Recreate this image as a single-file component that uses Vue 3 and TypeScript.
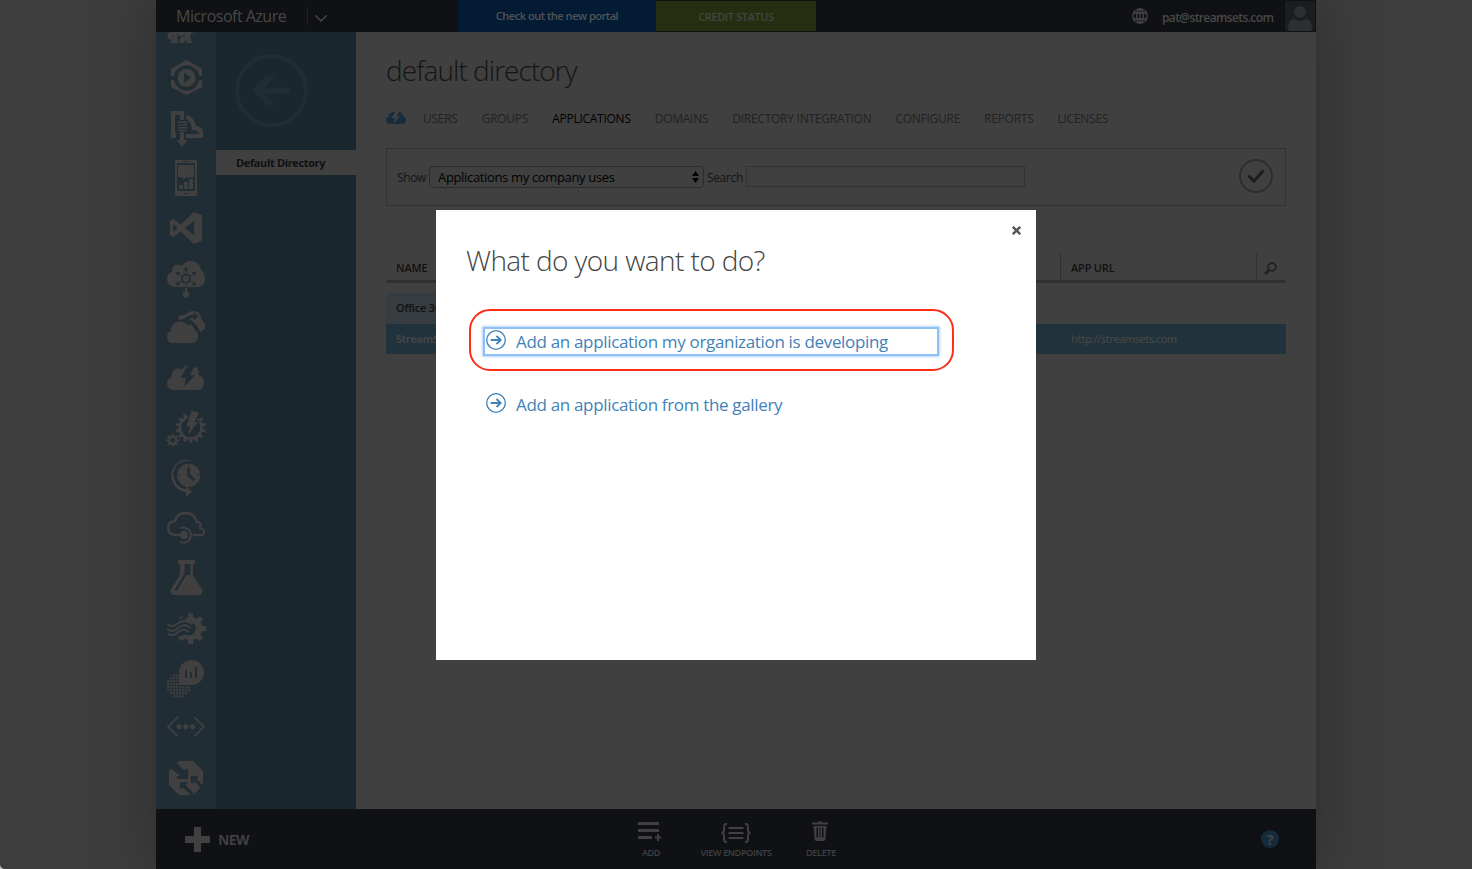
<script setup lang="ts">
interface Tab {
  label: string
  active?: boolean
}

const tabs: Tab[] = [
  { label: 'USERS' },
  { label: 'GROUPS' },
  { label: 'APPLICATIONS', active: true },
  { label: 'DOMAINS' },
  { label: 'DIRECTORY INTEGRATION' },
  { label: 'CONFIGURE' },
  { label: 'REPORTS' },
  { label: 'LICENSES' },
]

// Outline of a cog: teeth alternate between the inner and outer radius.
function gear(cx: number, cy: number, inner: number, outer: number, teeth: number): string {
  const step = (Math.PI * 2) / teeth
  const points: string[] = []
  for (let i = 0; i < teeth; i++) {
    const a = i * step - Math.PI / 2
    const corners: [number, number][] = [
      [a - step * 0.3, inner],
      [a - step * 0.19, outer],
      [a + step * 0.19, outer],
      [a + step * 0.3, inner],
    ]
    for (const [angle, r] of corners) {
      points.push(`${(cx + r * Math.cos(angle)).toFixed(2)} ${(cy + r * Math.sin(angle)).toFixed(2)}`)
    }
  }
  return `M${points.join('L')}Z`
}

const bigGear = gear(34.7, 25.7, 12.2, 15.2, 14)
const smallGear = gear(16.7, 38.3, 4.6, 6.6, 8)
const streamGear = gear(34.7, 26.6, 11.5, 15.6, 8)

// Cells of the dotted globe, kept only inside its circle.
const cells: { x: number; y: number }[] = []
for (let row = 0; row < 8; row++) {
  for (let col = 0; col < 8; col++) {
    const x = 11.2 + col * 3
    const y = 22.2 + row * 3
    const dx = x + 1 - 22.7
    const dy = y + 1 - 33.7
    const underBubble = x > 21.5 && y < 33
    if (dx * dx + dy * dy < 140 && !underBubble) cells.push({ x, y })
  }
}
</script>

<template>
  <div class="page">
    <div class="shell">
      <header class="topbar">
        <span class="brand">Microsoft Azure</span>
        <span class="brand-menu">
          <svg width="14" height="9" viewBox="0 0 14 9"><path d="M1.2 1.2L7 7L12.8 1.2" fill="none" stroke="#484848" stroke-width="1.4" /></svg>
        </span>
        <span class="portal">Check out the new portal</span>
        <span class="credit">CREDIT STATUS</span>
        <span class="spacer"></span>
        <svg class="globe" width="16" height="16" viewBox="0 0 16 16">
          <g fill="none" stroke="#464646" stroke-width="1.3">
            <circle cx="8" cy="8" r="7.2" />
            <ellipse cx="8" cy="8" rx="3.3" ry="7.2" />
            <path d="M8 1V15M1.8 5H14.2M1.8 11H14.2" />
          </g>
        </svg>
        <span class="email">pat@streamsets.com</span>
        <svg class="avatar" width="30" height="30" viewBox="0 0 30 30">
          <rect width="30" height="30" fill="#1c1d20" />
          <path d="M3 30Q3 18 9 17.8Q15 22 21 17.8Q27 18 27 30Z" fill="#2d2e31" />
          <circle cx="15" cy="11" r="6" fill="#2d2e31" />
        </svg>
      </header>

      <div class="body">
        <nav class="rail">
          <svg class="peek" viewBox="0 0 60 20">
            <path d="M11 2L14 0H35L36 2L39 1L40 -1V1Q38 3 35 2L34 4L36 11H30L31 7L27 11H23L25 5L21 4L22 11H15L16 7L13 8Z" fill="#404040" />
            <path d="M16 3L18 5M21 2L25 5L29 3" class="cut-line" />
          </svg>
          <svg viewBox="0 0 60 50">
            <path d="M15 24V16.8L30.6 8L46 16.8V24H43.4A13 13 0 0 0 17.8 24Z" />
            <path d="M15 28V35L30.6 43L46 35V28H43.4A13 13 0 0 1 17.8 28Z" />
            <circle cx="30.6" cy="25.8" r="9" />
            <path class="cut" d="M28 20.5L35 25.7L28 31Z" />
          </svg>
          <svg viewBox="0 0 60 50">
            <path d="M15 9H28V18H24V13H19V31H20V36H15Z" />
            <path d="M22 19.5H31V21H22ZM22 22.2H31V23.7H22ZM22 25H31V26.5H22ZM22 27.7H31V29H22Z" />
            <path d="M30 13Q38 14 40 24Q47 25 47 30V36H30V32H43Q43 28.5 38 28H36Q36 20 30 17Z" />
            <path d="M24 30H28V38H31.5L26 45L20.7 38H24Z" />
          </svg>
          <svg viewBox="0 0 60 50">
            <rect x="19" y="8" width="22" height="36" rx="1" />
            <rect class="cut" x="21" y="11" width="18" height="28" />
            <path class="cut" d="M26 9H33V9.8H26ZM28 41H32V42H28Z" />
            <path d="M23.5 13H36.5Q38 13 38 14.5V24Q38 25.5 36.5 25.5H29.5L27 29L27.5 25.5H23.5Q22 25.5 22 24V14.5Q22 13 23.5 13Z" />
            <path d="M23 33H27V37H23ZM28 30H32V37H28ZM33 27H37V37H33Z" />
          </svg>
          <svg viewBox="0 0 60 50">
            <path fill-rule="evenodd" d="M38 10L46 13V38.6L38 42L24.5 29.6L17.5 35L14 33.2V18.8L17.5 17L24.5 22.4ZM38 19L29 26L38 33.5ZM17.2 22.2V29.8L21.5 26Z" />
          </svg>
          <svg viewBox="0 0 60 50">
            <path d="M19 35Q11 34 11 27Q11 21 16 20Q16 12 22 12.5Q25 12.5 26 14Q29 9 35 9Q43 9 45 18Q49 21 49 27Q49 34 42 35Z" />
            <circle cx="30" cy="42.5" r="3.2" />
            <path d="M29 34H31V42H29Z" />
            <path class="cut-line" d="M30 17V21.5M30 31V36M21 21L26 24.5M39 21L34 24.5M21 32L26 29M39 32L34 29" stroke-width="1.3" />
            <circle class="cut-line ring" cx="30" cy="26.7" r="4" />
            <path class="cut" d="M30 14.5L32.5 18H27.5ZM19.5 20L24 20L21.5 24ZM40.5 20L36 20L38.5 24ZM19.5 33.5L24 33L21.5 29.5ZM40.5 33.5L36 33L38.5 29.5Z" />
          </svg>
          <svg viewBox="0 0 60 50">
            <path d="M22 17Q23 12 29 13Q33 8.5 38 9Q45 10 45.5 18Q49 20 49 25Q48 29 44 30Q42 24 38 21Q32 14 25 18Z" />
            <path class="cut-line thick" d="M28 20Q31 14.5 38 14.3" />
            <path class="cut" d="M37.5 10L42.5 14.3L37.5 18.5Z" />
            <path class="halo" d="M17 41Q11 41 11 35Q11 30 15 29Q16 19.5 24 19.5Q29 19.5 31 23Q37 21 38.5 28Q42 29 42 34Q42 41 36 41Z" />
          </svg>
          <svg viewBox="0 0 60 50">
            <path d="M17 38Q11 37 11 32Q11 27 15 26Q15 18 21 16.5Q24 16 26 17.5Q29 12.5 35 13Q42 15 42 23Q48 24 48 31Q47 37 43 38Z" />
            <path class="cut" d="M33 11L24.5 26H30L28 35L39 23H34L40 11Z" />
            <path d="M36.5 20.500L39.5 15Q43 16 42.5 23Z" />
          </svg>
          <svg viewBox="0 0 60 50">
            <path :d="bigGear" />
            <circle class="cut" cx="34.7" cy="25.7" r="9.6" />
            <path class="halo" d="M35.5 8.5L43 10.5L38.5 20H42L32 33L34 24.5H30.5Z" />
            <path :d="smallGear" />
            <circle class="cut" cx="16.7" cy="38.3" r="2.4" />
          </svg>
          <svg viewBox="0 0 60 50">
            <circle cx="32.7" cy="23.3" r="11.5" />
            <path class="cut" d="M31 16H34V22L39.5 27.5L37.5 29.5L31 24Z" />
            <path class="cut" d="M32 13H33.4V14.4H32ZM22.5 22.5H24V24H22.5ZM41.5 22.5H43V24H41.5Z" />
            <path d="M38 9Q26 5 18.5 13.5Q12 23 18 33Q23 39.5 30 40V45L36 39.5L30 34V37Q22 36 19 29Q15 20 21 13Q28 7 38 9Z" />
          </svg>
          <svg viewBox="0 0 60 50">
            <path class="line" d="M23 33H19Q12 32 12 26Q12 20 19 19Q21 11 30 11Q38 11 41 20Q46 20 44 26Q48 27 48 30Q48 33 44 33H37" stroke-width="2.3" />
            <circle cx="28" cy="33" r="4.2" />
            <path class="line" d="M24.5 26Q29 24.5 33 28Q37 33 33 38.5Q29 42 24 40" stroke-width="2" />
            <path d="M20 32H26V34H20Z" />
          </svg>
          <svg viewBox="0 0 60 50">
            <path fill-rule="evenodd" d="M22 8H39V12H37V23L47 39L44.5 43H16.5L14 39L24 23V12H22ZM27 12V24L18.5 38L20.5 39L28 27L30.5 23H34.5V12Z" />
            <path d="M27 12H28.5V23H27Z" />
          </svg>
          <svg viewBox="0 0 60 50">
            <path :d="streamGear" />
            <circle class="cut" cx="33" cy="26.5" r="6.8" />
            <path class="cut" d="M12 18L28 16L37 24L33 31L25 34L12 36Z" />
            <path class="line" d="M12 22Q16 26 21 22Q28 16 36 22M11 27Q16 31 21 27Q28 20 35 26M12 32Q17 35 21 31Q28 25 33 30" stroke-width="1.8" />
          </svg>
          <svg viewBox="0 0 60 50">
            <path d="M23 33V20.5A12.5 12.5 0 1 1 35.5 33Z" />
            <path class="cut" d="M29 18H31V26H29ZM34 20H36V26H34ZM39 15H41V26H39Z" />
            <rect v-for="(c, i) in cells" :key="i" :x="c.x" :y="c.y" width="2.1" height="2.1" />
          </svg>
          <svg viewBox="0 0 60 50">
            <path class="line" d="M22 15L12 24.8L22 34.5M38 15L48 24.8L38 34.5" stroke-width="1.7" />
            <circle cx="23" cy="24.8" r="2.5" />
            <circle cx="29.8" cy="24.8" r="2.5" />
            <circle cx="36.6" cy="24.8" r="2.5" />
          </svg>
          <svg viewBox="0 0 60 50">
            <path d="M23 9H37L47 19V33L37 43H23L13 33V19Z" />
            <path class="cut" d="M17 13L20 10L29 19V17H32V27H21V24H24L15 16ZM35 24H42V26.5H40L47 33.5V38L38 29V31H35ZM24 30H31V32.5H29L38 41.5L34.5 43L26.5 35V37H24Z" />
          </svg>
        </nav>

        <aside class="panel">
          <svg class="back" width="74" height="74" viewBox="0 0 74 74">
            <circle cx="37.5" cy="37.5" r="34.500" fill="none" stroke="#212d35" stroke-width="4" />
            <path d="M18 37.500L33 23H42L31 34.300H56V41H31L42 52H33Z" fill="#212d35" />
          </svg>
          <div class="directory">Default Directory</div>
        </aside>

        <main class="content">
          <h1>default directory</h1>
          <div class="tabs">
            <svg class="tab-cloud" width="20" height="14" viewBox="0 0 20 14">
              <path d="M4 13Q0 13 0 9Q0 6 2.5 5.5Q2.5 2 6 1.5Q8 0 11 0.5Q16 0 17 5Q20 6 20 9.5Q20 13 16.5 13Z" fill="#172c3c" />
              <path d="M9.5 0L5.5 7H9L7.5 12.5L14 5.5H11L13.5 0Z" fill="#404040" />
            </svg>
            <span v-for="tab in tabs" :key="tab.label" class="tab" :class="{ active: tab.active }">{{ tab.label }}</span>
          </div>

          <div class="filter">
            <span class="filter-label show">Show</span>
            <span class="select">
              <span>Applications my company uses</span>
              <svg width="7" height="12" viewBox="0 0 7 12"><path d="M0 5L3.5 0L7 5ZM0 7L3.5 12L7 7Z" fill="#000" /></svg>
            </span>
            <span class="filter-label search">Search</span>
            <span class="field"></span>
            <svg class="apply" width="34" height="34" viewBox="0 0 34 34">
              <circle cx="17" cy="17" r="16" fill="none" stroke="#2e2e2e" stroke-width="2" />
              <path d="M9.5 16.5L15 22L24.5 11.5" fill="none" stroke="#1c1c1c" stroke-width="3" />
            </svg>
          </div>

          <div class="thead">
            <span class="th name">NAME</span>
            <span class="th url">APP URL</span>
            <span class="th find">
              <svg width="13" height="13" viewBox="0 0 13 13">
                <circle cx="8" cy="5" r="3.9" fill="none" stroke="#1f1f1f" stroke-width="1.7" />
                <path d="M5 8L1 12" stroke="#1f1f1f" stroke-width="2.6" />
              </svg>
            </span>
          </div>
          <div class="row first"><span class="cell-name">Office 365</span></div>
          <div class="row selected">
            <span class="cell-name">StreamSets</span>
            <span class="cell-url">http://streamsets.com</span>
          </div>
        </main>
      </div>

      <footer class="footer">
        <svg class="plus" width="25" height="25" viewBox="0 0 25 25"><path d="M9 0H16V9H25V16H16V25H9V16H0V9H9Z" fill="#404040" /></svg>
        <span class="new">NEW</span>
        <div class="action add">
          <svg width="24" height="22" viewBox="0 0 24 22"><path d="M0 1H21V4H0ZM0 8H21V11H0ZM0 15H14V18H0ZM19 13H21V15.500H23V17.500H21V20H19V17.500H17V15.500H19Z" fill="#404040" /></svg>
          <span>ADD</span>
        </div>
        <div class="action endpoints">
          <svg width="32" height="22" viewBox="0 0 32 22">
            <path d="M7 2H6Q4 2 4 5V8Q4 11 1.500 11Q4 11 4 14V17Q4 20 6 20H7M25 2H26Q28 2 28 5V8Q28 11 30.500 11Q28 11 28 14V17Q28 20 26 20H25" fill="none" stroke="#404040" stroke-width="2" />
            <path d="M8.500 5H23.500V7H8.500ZM8.500 10H23.500V12H8.500ZM8.500 15H23.500V17H8.500Z" fill="#404040" />
          </svg>
          <span>VIEW ENDPOINTS</span>
        </div>
        <div class="action delete">
          <svg width="16" height="22" viewBox="0 0 16 22">
            <path d="M6 0.500H10V1.500H16V3.500H0V1.500H6Z" fill="#404040" />
            <path fill-rule="evenodd" d="M1.500 5H14.500L13.500 18Q13 20 11.500 20H4.500Q3 20 2.500 18ZM4.500 6.500V16.500H6V6.500ZM7.500 6.500V16.500H8.500V6.500ZM10 6.500V16.500H11.500V6.500Z" fill="#404040" />
          </svg>
          <span>DELETE</span>
        </div>
        <span class="help">?</span>
      </footer>
    </div>

    <section class="modal">
      <svg class="close" width="9" height="9" viewBox="0 0 9 9"><path d="M0.800 0.800L8.200 8.200M8.200 0.800L0.800 8.200" stroke="#555" stroke-width="2.400" /></svg>
      <h2>What do you want to do?</h2>
      <div class="highlight">
        <a class="choice focused">
          <svg width="20" height="20" viewBox="0 0 20 20"><g fill="none" stroke="#3f82b7"><circle cx="10" cy="10" r="9.300" stroke-width="1.300" /><path d="M4.800 10H14.500M10.500 6L14.700 10L10.500 14" stroke-width="1.800" /></g></svg>
          <span>Add an application my organization is developing</span>
        </a>
      </div>
      <a class="choice gallery">
        <svg width="20" height="20" viewBox="0 0 20 20"><g fill="none" stroke="#3f82b7"><circle cx="10" cy="10" r="9.300" stroke-width="1.300" /><path d="M4.800 10H14.500M10.500 6L14.700 10L10.500 14" stroke-width="1.800" /></g></svg>
        <span>Add an application from the gallery</span>
      </a>
    </section>
    <i class="corner"></i>
  </div>
</template>

<style>
html,
body {
  margin: 0;
  overflow: hidden;
  background: #3d3d3d;
}
</style>

<style scoped>
.page {
  position: relative;
  width: 1472px;
  height: 869px;
  overflow: hidden;
  background: #3d3d3d;
  font-family: 'Open Sans', 'Noto Sans', sans-serif;
  font-size: 12px;
  white-space: nowrap;
}
.page * {
  box-sizing: border-box;
}
.page svg {
  display: block;
  flex: none;
}
.shell {
  width: 1160px;
  height: 869px;
  margin: 0 auto;
  display: flex;
  flex-direction: column;
  box-shadow: 0 0 60px rgba(0, 0, 0, 0.28);
}
.topbar {
  height: 32px;
  display: flex;
  align-items: center;
  background: #101115;
  color: #484848;
}
.brand {
  width: 151px;
  padding-left: 20px;
  font-size: 16px;
  letter-spacing: -0.5px;
}
.brand-menu {
  width: 151px;
  height: 18px;
  border-left: 1px solid #202124;
  padding: 7px 0 0 6px;
}
.portal {
  width: 198px;
  height: 32px;
  line-height: 32px;
  text-align: center;
  background: #031c34;
  font-size: 11px;
  font-weight: 600;
  letter-spacing: -0.47px;
  color: #515356;
}
.credit {
  width: 160px;
  height: 30px;
  line-height: 32px;
  text-align: center;
  background: #262e12;
  font-size: 11px;
  font-weight: 600;
  letter-spacing: -0.38px;
  color: #424542;
}
.spacer {
  flex: 1;
}
.email {
  width: 131px;
  padding: 2px 0 0 14px;
  font-size: 12px;
  font-weight: 600;
  letter-spacing: -0.62px;
}
.avatar {
  margin-left: 6px;
  margin-right: 1px;
}
.body {
  height: 777px;
  display: flex;
}
.rail {
  width: 60px;
  height: 777px;
  overflow: hidden;
  background: #212d34;
}
.rail svg {
  width: 60px;
  height: 50px;
  fill: #404040;
}
.rail svg.peek {
  height: 20px;
}
.cut {
  fill: #212d34;
}
.cut-line {
  fill: none;
  stroke: #212d34;
  stroke-width: 1;
}
.cut-line.ring {
  stroke-width: 1.8;
}
.cut-line.thick {
  stroke-width: 3;
}
.line {
  fill: none;
  stroke: #404040;
}
.halo {
  stroke: #212d34;
  stroke-width: 3;
  paint-order: stroke;
}
.panel {
  width: 140px;
  background: #1b272e;
}
.back {
  margin: 21px 0 0 18px;
}
.directory {
  height: 25px;
  margin-top: 23px;
  padding-left: 20px;
  line-height: 25px;
  background: #404040;
  color: #111;
  font-size: 11px;
  font-weight: 700;
  letter-spacing: -0.36px;
}
.content {
  width: 960px;
  padding: 0 30px;
  background: #404040;
}
h1,
h2 {
  margin: 0;
  font-size: 28px;
  font-weight: 300;
  line-height: 40px;
}
h1 {
  padding-top: 18px;
  color: #151515;
  letter-spacing: -0.96px;
}
.tabs {
  height: 16px;
  margin-top: 20px;
  display: flex;
  align-items: center;
  gap: 24px;
}
.tab-cloud {
  margin-right: -7px;
}
.tab {
  font-size: 12px;
  letter-spacing: -0.26px;
  color: #222;
}
.tab.active {
  color: #000;
}
.filter {
  height: 58px;
  margin-top: 22px;
  padding-left: 10px;
  display: flex;
  align-items: center;
  border: 1px solid #333;
}
.filter-label {
  font-size: 12px;
  color: #151515;
  letter-spacing: -0.35px;
}
.show {
  width: 32px;
}
.select {
  width: 275px;
  height: 22px;
  padding: 0 4px 0 8px;
  display: flex;
  align-items: center;
  justify-content: space-between;
  border: 1px solid #2b2b2b;
  border-radius: 4px;
  font-size: 13px;
  letter-spacing: -0.34px;
  color: #000;
}
.search {
  width: 42px;
  padding-left: 3px;
}
.field {
  width: 279px;
  height: 21px;
  margin-top: -1px;
  border: 1px solid #333;
}
.apply {
  margin: -2px 0 0 214px;
}
.thead {
  height: 29px;
  margin-top: 48px;
  display: flex;
  border-bottom: 3px solid #303030;
  margin-bottom: 10px;
}
.th {
  height: 26px;
  line-height: 28px;
  padding-left: 10px;
  font-size: 11px;
  font-weight: 600;
  letter-spacing: -0.2px;
  color: #111;
}
.name {
  width: 674px;
}
.url {
  width: 196px;
  border-left: 1px solid #303030;
}
.find {
  width: 30px;
  padding: 8px 0 0 7px;
  border-left: 1px solid #303030;
}
.row {
  display: flex;
  height: 30px;
  line-height: 30px;
  padding-left: 10px;
  font-size: 11px;
  font-weight: 600;
  letter-spacing: -0.25px;
}
.first {
  height: 31px;
  width: 600px;
  background: #373c40;
  color: #111;
}
.selected {
  background: #20323c;
  color: #444;
}
.selected .cell-name {
  width: 675px;
  font-weight: 700;
  letter-spacing: -0.5px;
}
.cell-url {
  letter-spacing: -0.63px;
}
.footer {
  height: 60px;
  display: flex;
  background: #101115;
  color: #404040;
}
.plus {
  margin: 18px 0 0 29px;
}
.new {
  width: 420px;
  padding: 20px 0 0 8px;
  font-size: 14px;
  line-height: 22px;
  font-weight: 700;
  letter-spacing: -0.6px;
}
.action {
  display: flex;
  flex-direction: column;
  align-items: center;
  padding-top: 12px;
  font-size: 9px;
  line-height: 12px;
  font-weight: 600;
  letter-spacing: -0.3px;
}
.action span {
  margin-top: 4px;
}
.add {
  width: 40px;
}
.add span {
  padding-left: 2px;
}
.endpoints {
  width: 80px;
  margin-left: 26px;
}
.endpoints svg {
  margin-top: 1px;
}
.endpoints span {
  margin-top: 3px;
}
.delete {
  width: 40px;
  margin-left: 24px;
}
.delete span {
  padding-left: 2px;
}
.help {
  width: 18px;
  height: 18px;
  margin: 21px 0 0 421px;
  border-radius: 50%;
  background: #142b3b;
  color: #444;
  font-size: 15px;
  line-height: 18px;
  font-weight: 700;
  text-align: center;
}
.modal {
  position: absolute;
  left: 436px;
  top: 210px;
  width: 600px;
  height: 450px;
  background: #fff;
}
.close {
  margin: 16px 0 0 576px;
}
h2 {
  margin: 5px 0 0 30px;
  color: #444;
  letter-spacing: -0.6px;
}
.highlight {
  width: 485px;
  height: 62px;
  margin: 29px 0 0 33px;
  padding: 18px 0 0 14px;
  border: 2px solid #ff2d1a;
  border-radius: 21px;
}
.choice {
  display: flex;
  width: 452px;
  font-size: 17px;
  line-height: 26px;
  color: #3f82b7;
}
.choice span {
  margin-left: 10px;
  letter-spacing: -0.33px;
}
.focused {
  height: 25px;
  padding-left: 1px;
  box-shadow: 0 0 0 2px #8cc0f7, 0 0 2px 3px #b5d6fa;
}
.focused svg {
  margin-top: 1px;
}
.gallery {
  margin: 22px 0 0 50px;
}
.gallery span {
  line-height: 24px;
}
.corner {
  position: absolute;
  left: 0;
  bottom: 0;
  width: 5px;
  height: 5px;
  background: radial-gradient(circle at 100% 0, transparent 4.5px, #bbb 5.5px);
}
</style>
